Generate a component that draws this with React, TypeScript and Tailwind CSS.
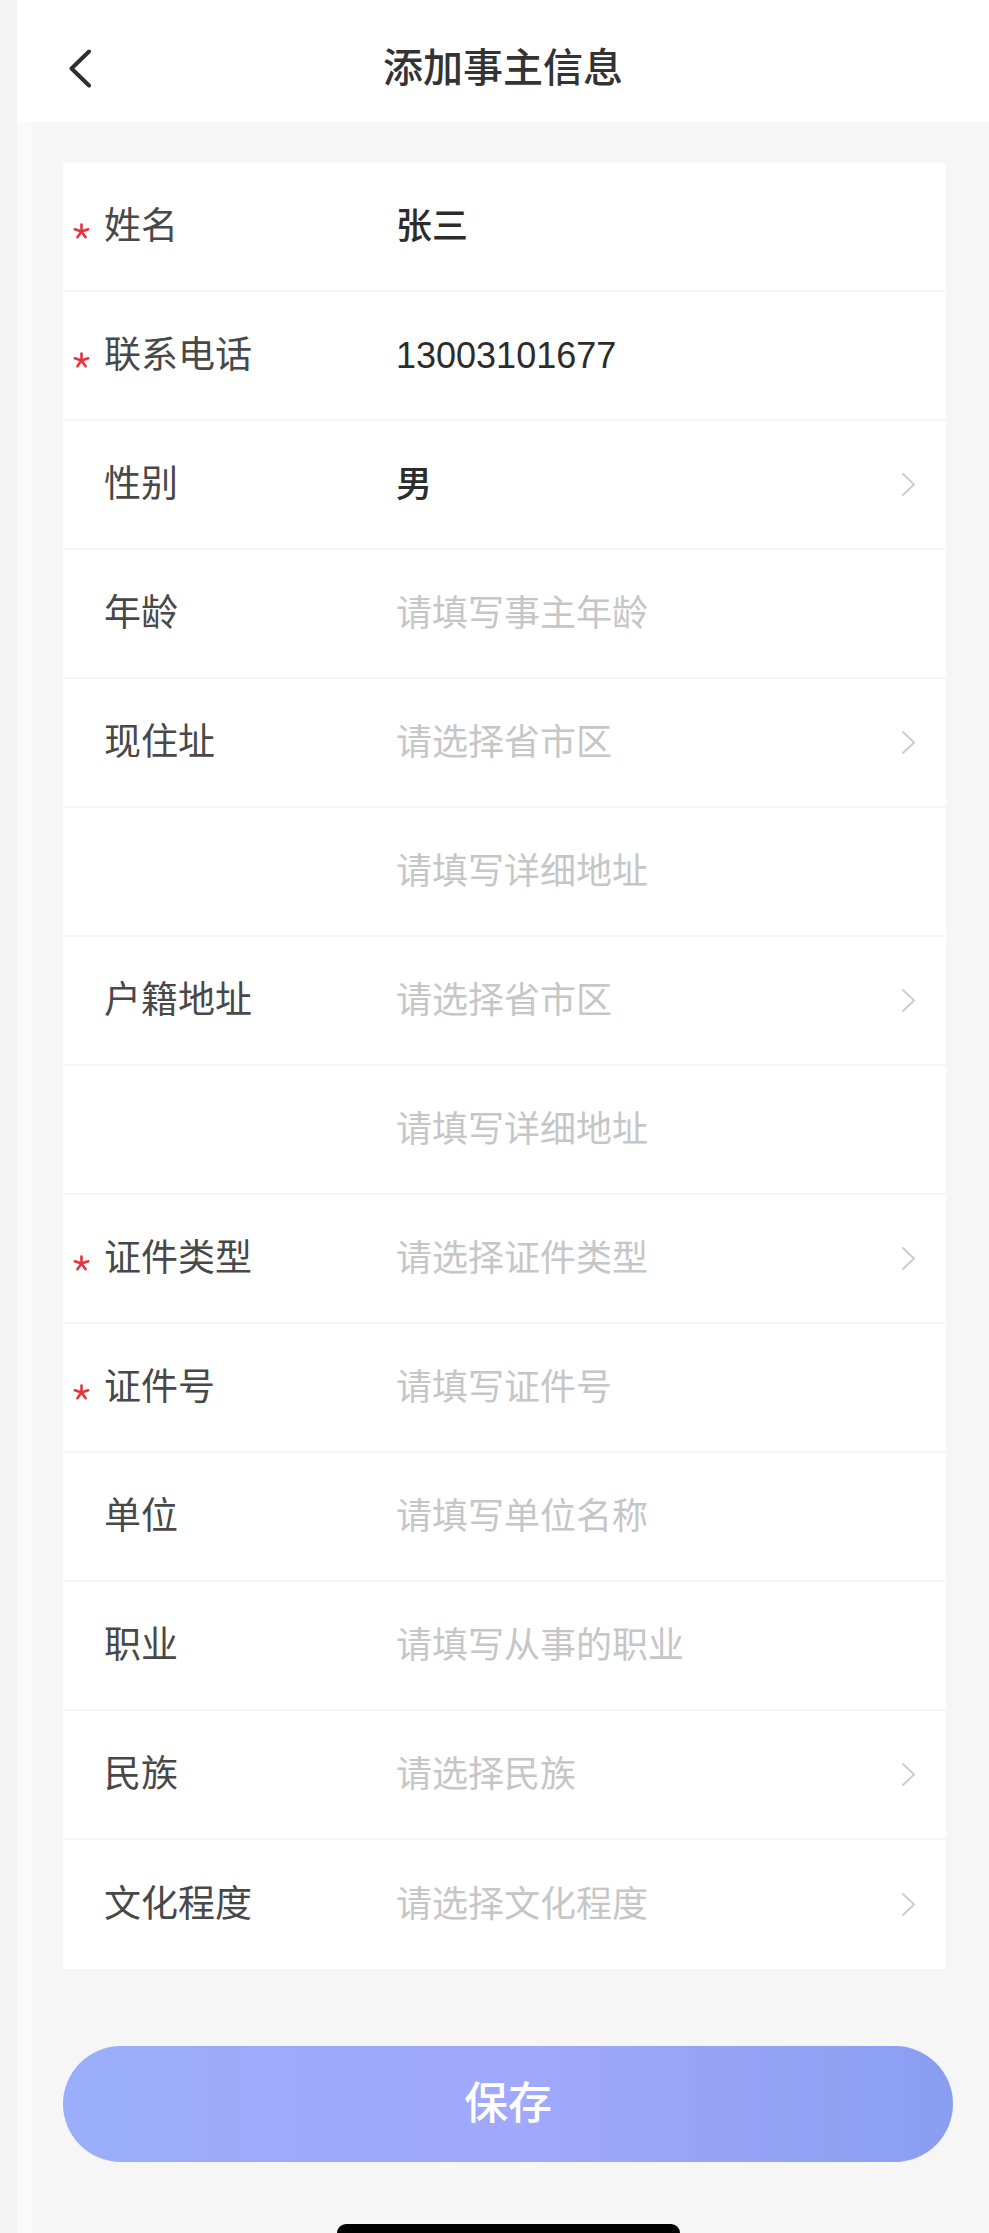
import React from "react";

type Row = {
  label?: string;
  required?: boolean;
  value?: string;
  placeholder?: string;
  arrow?: boolean;
};

const rows: Row[] = [
  { label: "姓名", required: true, value: "张三" },
  { label: "联系电话", required: true, value: "13003101677" },
  { label: "性别", value: "男", arrow: true },
  { label: "年龄", placeholder: "请填写事主年龄" },
  { label: "现住址", placeholder: "请选择省市区", arrow: true },
  { placeholder: "请填写详细地址" },
  { label: "户籍地址", placeholder: "请选择省市区", arrow: true },
  { placeholder: "请填写详细地址" },
  { label: "证件类型", required: true, placeholder: "请选择证件类型", arrow: true },
  { label: "证件号", required: true, placeholder: "请填写证件号" },
  { label: "单位", placeholder: "请填写单位名称" },
  { label: "职业", placeholder: "请填写从事的职业" },
  { label: "民族", placeholder: "请选择民族", arrow: true },
  { label: "文化程度", placeholder: "请选择文化程度", arrow: true },
];

function Star() {
  const pts = [-90, -18, 54, 126, 198].map((a) => {
    const r = (a * Math.PI) / 180;
    return [8.5 + Math.cos(r) * 7, 8.5 + Math.sin(r) * 7];
  });
  return (
    <svg width="17" height="17" viewBox="0 0 17 17" className="mt-[10px]">
      {pts.map(([x, y], i) => (
        <line key={i} x1="8.5" y1="8.5" x2={x} y2={y} stroke="#e5343c" strokeWidth="2.6" strokeLinecap="round" />
      ))}
    </svg>
  );
}

function Chevron() {
  return (
    <svg width="15" height="25" viewBox="0 0 15 25" fill="none">
      <path d="M2 2 L13 12.5 L2 23" stroke="#cbcbcb" strokeWidth="1.8" strokeLinecap="round" strokeLinejoin="round" />
    </svg>
  );
}

export default function App() {
  const font = { fontFamily: '"Liberation Sans", "Noto Sans CJK SC", sans-serif' };
  return (
    <div className="flex min-h-[2233px] w-[989px] bg-[#f3f3f3]" style={font}>
      <div className="w-[17px] shrink-0 bg-[#f3f3f3]" />
      <div className="flex flex-1 flex-col">
        <header className="grid h-[122px] grid-cols-[1fr_auto_1fr] items-center bg-white pt-[14px]">
          <div className="pl-[51px]">
            <svg width="24" height="39" viewBox="0 0 24 39" fill="none">
              <path d="M21 2.5 L3.5 19.5 L21 36.5" stroke="#2f2f2f" strokeWidth="4" strokeLinecap="round" strokeLinejoin="round" />
            </svg>
          </div>
          <h1 className="text-[40px] font-medium leading-none text-[#333333]">添加事主信息</h1>
          <div />
        </header>
        <div className="flex flex-1">
          <div className="w-[15px] shrink-0 bg-[#fafafa]" />
          <main className="flex flex-1 flex-col bg-[#f6f6f6] pl-[31px] pr-[36px] pt-[41px]">
            <div className="w-[883px] bg-white">
              {rows.map((r, i) => (
                <div
                  key={i}
                  className={`flex h-[129px] items-center pl-[10px] pr-[30px] ${i < rows.length - 1 ? "border-b-2 border-[#f5f5f5]" : ""}`}
                >
                  <div className="flex w-[31px] shrink-0 items-center">{r.required ? <Star /> : null}</div>
                  <div className="w-[292px] shrink-0 text-[37px] leading-none text-[#484848]">{r.label ?? ""}</div>
                  <div className="flex-1 text-[36px] leading-none">
                    {r.value ? (
                      <span className="font-medium text-[#2c2c2c]">{r.value}</span>
                    ) : (
                      <span className="text-[#c6c6c6]">{r.placeholder}</span>
                    )}
                  </div>
                  {r.arrow ? <Chevron /> : null}
                </div>
              ))}
            </div>
            <button className="mt-[77px] flex h-[116px] w-[890px] items-center justify-center rounded-full bg-gradient-to-r from-[#9aaefb] via-[#a0a9fd] to-[#8a9ef1] text-[44px] font-medium text-white">
              保存
            </button>
            <div className="ml-[274px] mt-[62px] h-[9px] w-[343px] rounded-t-full bg-black" />
          </main>
        </div>
      </div>
    </div>
  );
}
